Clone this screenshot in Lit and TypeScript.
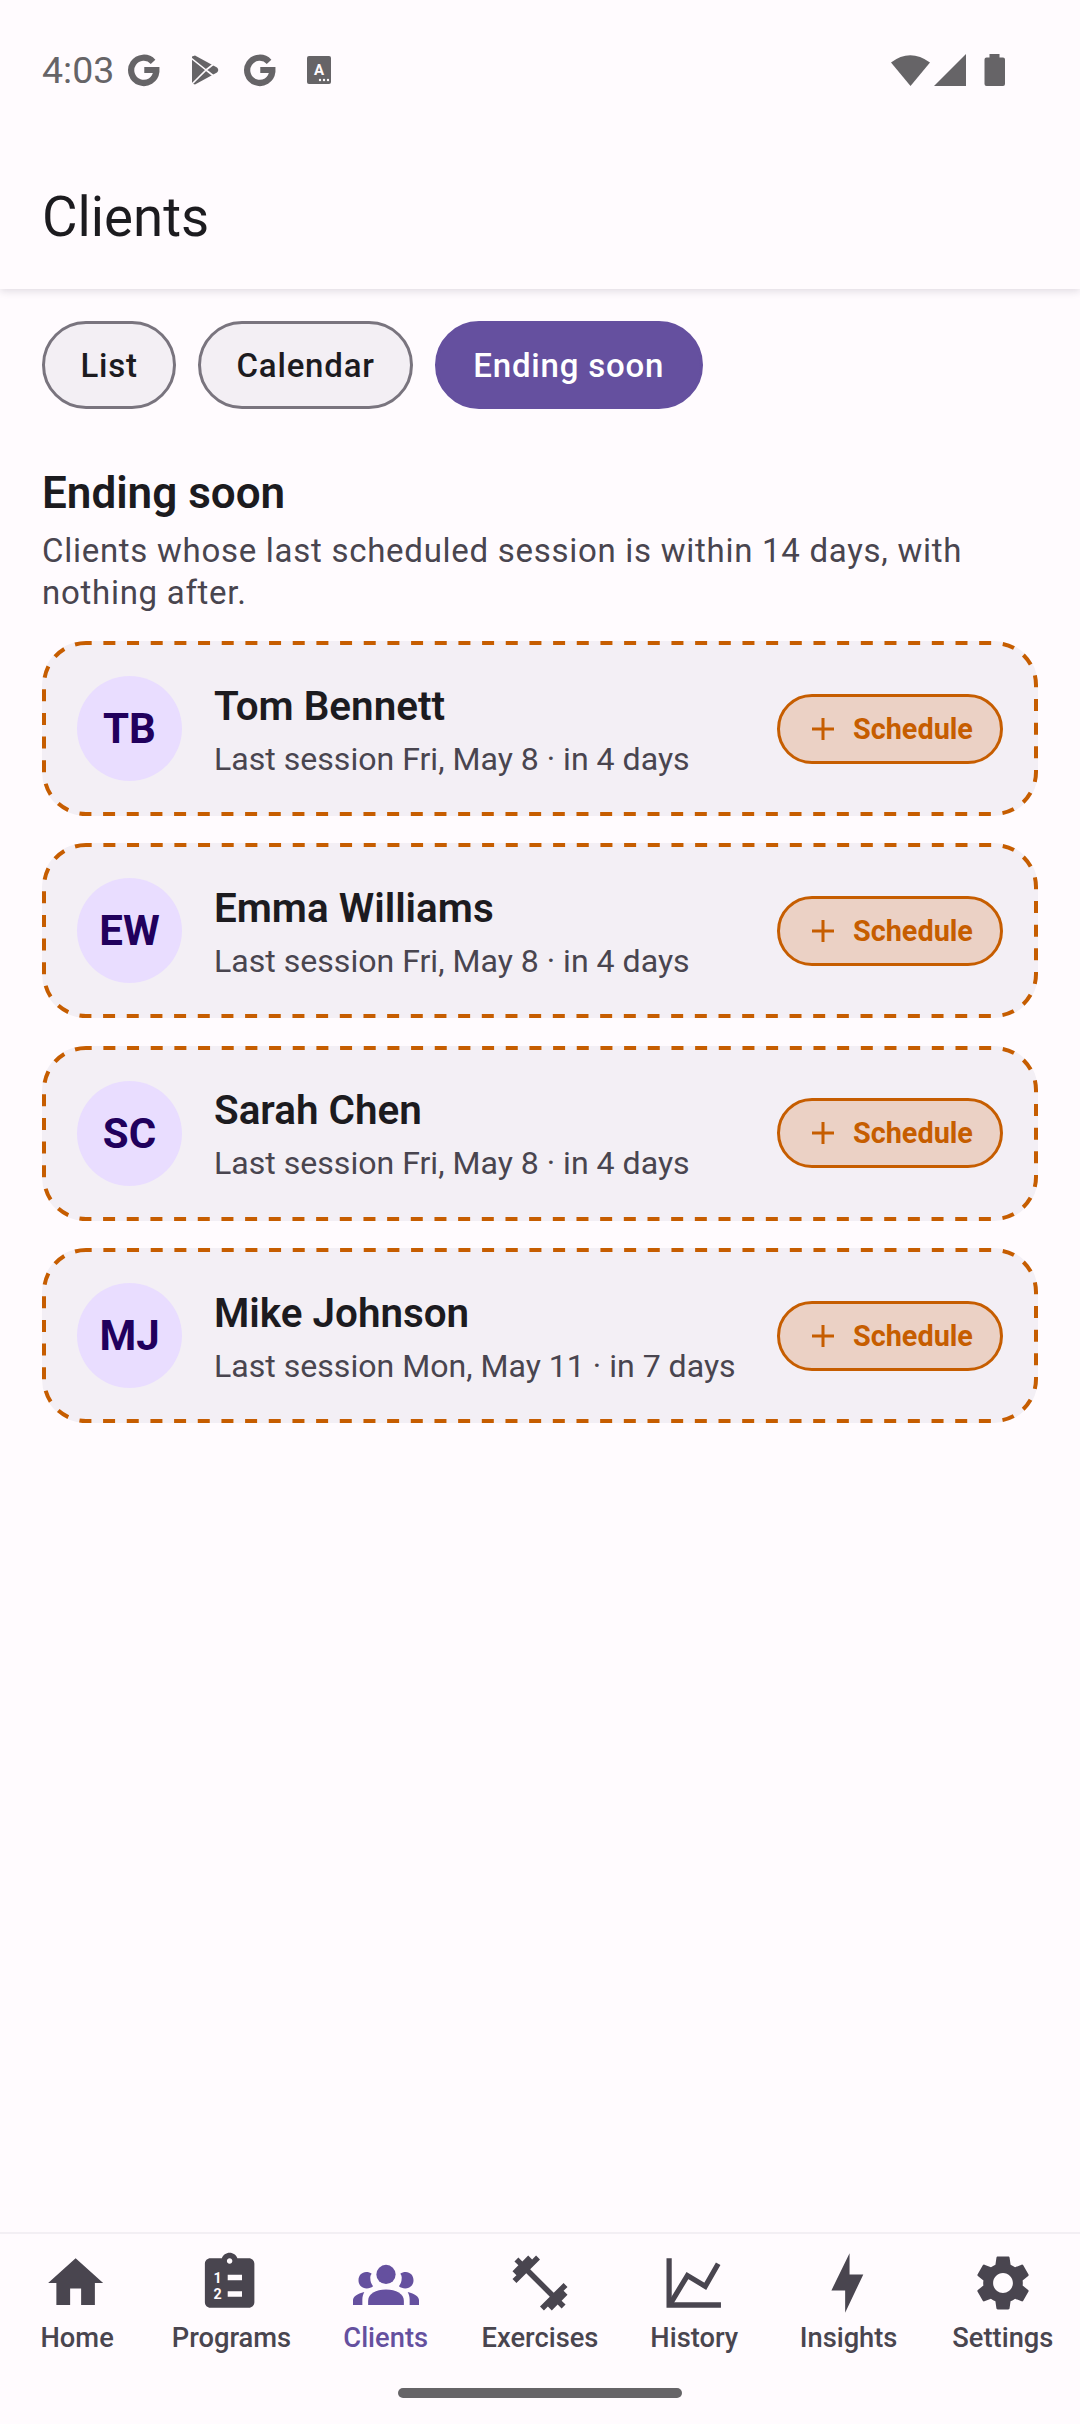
import { LitElement, html, css, svg } from "lit";
import { customElement } from "lit/decorators.js";

const clients = [
  { i: "TB", n: "Tom Bennett", s: "Last session Fri, May 8 · in 4 days" },
  { i: "EW", n: "Emma Williams", s: "Last session Fri, May 8 · in 4 days" },
  { i: "SC", n: "Sarah Chen", s: "Last session Fri, May 8 · in 4 days" },
  { i: "MJ", n: "Mike Johnson", s: "Last session Mon, May 11 · in 7 days" },
];

const gLogo = html`<svg class="st" width="34" height="34" viewBox="0 0 24 24"><path d="M18.4 6.2A8.9 8.9 0 1 0 20.7 13.2V12H12.2" fill="none" stroke="#666467" stroke-width="4.4"/></svg>`;

const sidePeople = svg`<path d="M4.8 8C3.2 8 2 9.3 2 11C2 12.8 3.3 14 5 14C5.9 14 6.7 13.7 7.3 13.2C6.6 12.3 6.3 11.4 6.3 10.3C6.2 9.6 6.5 8.9 6.8 8.6C6.3 8.2 5.6 8 4.8 8z"/><path d="M0 20V18.3C0 17 1.5 15.9 4.1 15.3C3.7 16.2 3.4 17 3.4 18V20z"/>`;

const navItems = [
  { label: "Home", vb: "0.5 0 24 24", icon: svg`<path d="M10 20v-6h4v6h5v-8h3L12 3 2 12h3v8z"/>` },
  {
    label: "Programs", vb: "0.5 0 24 24",
    icon: svg`<path d="M19 3h-4.18C14.4 1.84 13.3 1 12 1c-1.3 0-2.4.84-2.82 2H5c-1.1 0-2 .9-2 2v14c0 1.1.9 2 2 2h14c1.1 0 2-.9 2-2V5c0-1.1-.9-2-2-2zm-7 0c.55 0 1 .45 1 1s-.45 1-1 1-1-.45-1-1 .45-1 1-1z"/><rect x="11.3" y="9" width="5.2" height="2" fill="#fffbfe"/><rect x="11.3" y="15" width="5.2" height="2" fill="#fffbfe"/><text x="6.1" y="11.9" class="mini" fill="#fffbfe">1</text><text x="6.1" y="17.8" class="mini" fill="#fffbfe">2</text>`,
  },
  {
    label: "Clients", vb: "0 0 24 24", active: true,
    icon: svg`<circle cx="12" cy="8.9" r="3.5"/><path d="M5.5 20V18.5C5.5 16 8.3 14.4 12 14.4S18.500 16 18.500 18.5V20z"/>${sidePeople}<g transform="matrix(-1 0 0 1 24 0)">${sidePeople}</g>`,
  },
  {
    label: "Exercises", vb: "0 0 24 24",
    icon: svg`<path d="M20.57 14.86L22 13.43 20.57 12 17 15.57 8.43 7 12 3.43 10.57 2 9.14 3.43 7.71 2 5.57 4.14 4.14 2.71 2.71 4.14l1.43 1.43L2 7.71l1.43 1.43L2 10.57 3.43 12 7 8.43 15.57 17 12 20.57 13.43 22l1.43-1.43L16.29 22l2.14-2.14 1.43 1.43 1.43-1.43-1.43-1.43L22 16.29z"/>`,
  },
  {
    label: "History", vb: "0 0 24 24",
    icon: svg`<path d="M2 3h1.9v16H21.8v2H2z"/><path d="M3.6 19.2 9.6 9.3 16.1 13.2 20.8 5" fill="none" stroke="currentColor" stroke-width="1.9"/>`,
  },
  {
    label: "Insights", vb: "0 0 24 24",
    icon: svg`<path d="M12.2 1.2V8.9H17.2L10.6 22.8V14.7H5.6z"/>`,
  },
  {
    label: "Settings", vb: "0 0 24 24",
    icon: svg`<path d="M19.14 12.94c.04-.3.06-.61.06-.94 0-.32-.02-.64-.07-.94l2.03-1.58c.18-.14.23-.41.12-.61l-1.92-3.32c-.12-.22-.37-.29-.59-.22l-2.39.96c-.5-.38-1.03-.7-1.62-.94l-.36-2.54c-.04-.24-.24-.41-.48-.41h-3.84c-.24 0-.43.17-.47.41l-.36 2.54c-.59.24-1.13.57-1.62.94l-2.39-.96c-.22-.08-.47 0-.59.22L2.74 8.87c-.12.21-.08.47.12.61l2.03 1.58c-.05.3-.09.63-.09.94s.02.64.07.94l-2.03 1.58c-.18.14-.23.41-.12.61l1.92 3.32c.12.22.37.29.59.22l2.39-.96c.5.38 1.03.7 1.62.94l.36 2.54c.05.24.24.41.48.41h3.84c.24 0 .44-.17.47-.41l.36-2.54c.59-.24 1.13-.56 1.62-.94l2.39.96c.22.08.47 0 .59-.22l1.92-3.32c.12-.22.07-.47-.12-.61l-2.01-1.58zM12 15.6c-1.98 0-3.6-1.62-3.6-3.6s1.62-3.6 3.6-3.6 3.6 1.62 3.6 3.6-1.62 3.6-3.6 3.6z"/>`,
  },
];

@customElement("app-root")
export class AppRoot extends LitElement {
  static styles = css`
    :host {
      display: flex;
      flex-direction: column;
      width: 1080px;
      height: 2424px;
      background: #fffbfe;
      font-family: Roboto, "Noto Sans", sans-serif;
      color: #1c1b1f;
      overflow: hidden;
    }
    .status {
      height: 110px;
      flex: none;
      display: flex;
      align-items: center;
      padding: 0 0 0 42px;
      box-sizing: border-box;
      color: #666467;
      position: relative;
      z-index: 1;
      background: #fffbfe;
    }
    .time {
      font-size: 37.5px;
      line-height: 40px;
      width: 85px;
      font-weight: 400;
      margin-top: 30px;
    }
    .sticons {
      display: flex;
      align-items: center;
      margin-top: 30px;
    }
    .st { display: block; flex: none; }
    .g1 { margin-right: 30px; }
    .g2 { margin-right: 24px; }
    .g3 { margin-right: 30px; }
    .right {
      margin-left: auto;
      display: flex;
      align-items: flex-start;
      margin-top: 30px;
      padding-right: 75px;
    }
    .appbar {
      height: 179px;
      flex: none;
      box-sizing: border-box;
      padding: 81px 42px 0;
      box-shadow: 0 2px 8px rgba(30, 20, 50, 0.14);
      position: relative;
      background: #fffbfe;
    }
    .title {
      font-size: 54.6px;
      line-height: 52px;
      font-weight: 400;
    }
    main {
      flex: 1;
      padding: 32px 42px 0;
      display: flex;
      flex-direction: column;
    }
    .chips { display: flex; gap: 21.6px; }
    .chip {
      height: 88px;
      box-sizing: border-box;
      border-radius: 44px;
      border: 3px solid #79747e;
      background: #f3eff4;
      display: flex;
      align-items: center;
      justify-content: center;
      font-size: 33px;
      font-weight: 500;
      letter-spacing: 0.8px;
      padding: 0 35.5px;
      color: #1c1b1f;
    }
    .chip.on {
      background: #65509f;
      border-color: #65509f;
      color: #fff;
    }
    h2 {
      margin: 58px 0 0;
      font-size: 44px;
      line-height: 52px;
      font-weight: 600;
      letter-spacing: 0;
      color: #1c1b1f;
    }
    .desc {
      margin: 11px 0 0;
      font-size: 33px;
      line-height: 42px;
      color: #49454f;
      letter-spacing: 0.72px;
    }
    .cards {
      display: flex;
      flex-direction: column;
      gap: 27.4px;
      margin-top: 27px;
    }
    .card {
      position: relative;
      height: 175px;
      width: 996px;
      box-sizing: border-box;
      border-radius: 44px;
      background: #f3eff5;
      display: flex;
      align-items: center;
      padding: 0 35px;
      gap: 32px;
    }
    .dash {
      position: absolute;
      inset: 0;
      pointer-events: none;
    }
    .dash rect {
      fill: none;
      stroke: #c65d00;
      stroke-width: 4;
      stroke-dasharray: 12 11.67;
      stroke-dashoffset: 6.3;
    }
    .avatar {
      width: 105px;
      height: 105px;
      border-radius: 50%;
      background: #e9ddff;
      color: #21005d;
      display: flex;
      align-items: center;
      justify-content: center;
      font-size: 42px;
      font-weight: 700;
      flex: none;
    }
    .info {
      flex: 1;
      min-width: 0;
      display: flex;
      flex-direction: column;
      gap: 6px;
      padding-top: 6px;
    }
    .name {
      font-size: 40.4px;
      line-height: 48px;
      font-weight: 600;
      color: #1c1b1f;
    }
    .sub {
      font-size: 32.1px;
      line-height: 44px;
      color: #49454f;
      white-space: nowrap;
    }
    .btn {
      flex: none;
      width: 226px;
      height: 70px;
      box-sizing: border-box;
      border-radius: 35px;
      border: 3px solid #c65d00;
      background: #ebd1c5;
      color: #c65d00;
      display: flex;
      align-items: center;
      padding-left: 32px;
      gap: 19px;
      font-size: 28.8px;
      font-weight: 700;
    }
    nav {
      flex: none;
      height: 192px;
      box-sizing: border-box;
      border-top: 2px solid #f3eff4;
      display: grid;
      grid-template-columns: repeat(7, 1fr);
      position: relative;
    }
    .item {
      display: flex;
      flex-direction: column;
      align-items: center;
      padding-top: 16px;
      color: #49454f;
    }
    .item.on { color: #65509f; }
    .item svg { display: block; fill: currentColor; }
    .lbl {
      font-size: 27.3px;
      line-height: 36px;
      margin-top: 4px;
      font-weight: 500;
      white-space: nowrap;
    }
    .mini {
      font-family: Roboto, sans-serif;
      font-size: 5.2px;
      font-weight: 700;
    }
    .pill {
      position: absolute;
      left: 398px;
      top: 154px;
      width: 284px;
      height: 10px;
      border-radius: 5px;
      background: #666467;
    }
  `;

  render() {
    return html`
      <div class="status">
        <span class="time">4:03</span>
        <div class="sticons">
          <span class="g1">${gLogo}</span>
          <svg class="st g2" width="28" height="30" viewBox="0 0 28 30">
            <path d="M1 1.500 4 0.5 26 12.5Q28.5 15 26 17.5L4 29.5 1 28.5Z" fill="#666467"/>
            <path d="M0 3 15 15 1 29M15 15 24 8M15 15 24 22" fill="none" stroke="#fffbfe" stroke-width="1.6"/>
          </svg>
          <span class="g3">${gLogo}</span>
          <svg class="st" width="24" height="28" viewBox="0 0 24 28">
            <rect width="24" height="28" rx="2" fill="#666467"/>
            <text x="12" y="19" text-anchor="middle" font-family="Roboto" font-weight="700" font-size="15" fill="#fffbfe">A</text>
            <circle cx="13" cy="24" r="1.2" fill="#fffbfe"/><circle cx="17" cy="24" r="1.2" fill="#fffbfe"/><circle cx="21" cy="24" r="1.2" fill="#fffbfe"/>
          </svg>
        </div>
        <div class="right">
          <svg class="st" width="114" height="34" viewBox="0 0 114 34" fill="#666467">
            <path d="M0 9.5Q19 -5 39 9.5L19.5 33Z"/>
            <path d="M43 33 75 1V33Z"/>
            <path d="M99 1h10v3.5h3.5q2 0 2 2V31q0 2-2 2H96q-2 0-2-2V6.5q0-2 2-2h3z" transform="translate(-0.5 0)"/>
          </svg>
        </div>
      </div>
      <header class="appbar"><div class="title">Clients</div></header>
      <main>
        <div class="chips">
          <div class="chip">List</div>
          <div class="chip">Calendar</div>
          <div class="chip on">Ending soon</div>
        </div>
        <h2>Ending soon</h2>
        <p class="desc">Clients whose last scheduled session is within 14 days, with<br />nothing after.</p>
        <div class="cards">
          ${clients.map(
            (c) => html`
              <div class="card">
                <svg class="dash" width="996" height="175"><rect x="2" y="2" width="992" height="171" rx="42" ry="42"></rect></svg>
                <div class="avatar">${c.i}</div>
                <div class="info">
                  <div class="name">${c.n}</div>
                  <div class="sub">${c.s}</div>
                </div>
                <div class="btn">
                  <svg width="22" height="22" viewBox="0 0 22 22"><path d="M11 0V22M0 11H22" stroke="#c65d00" stroke-width="3" fill="none"/></svg>
                  <span>Schedule</span>
                </div>
              </div>
            `
          )}
        </div>
      </main>
      <nav>
        ${navItems.map(
          (n) => html`
            <div class="item ${n.active ? "on" : ""}">
              <svg width="66" height="66" viewBox="${n.vb}">${n.icon}</svg>
              <span class="lbl">${n.label}</span>
            </div>
          `
        )}
        <div class="pill"></div>
      </nav>
    `;
  }
}
